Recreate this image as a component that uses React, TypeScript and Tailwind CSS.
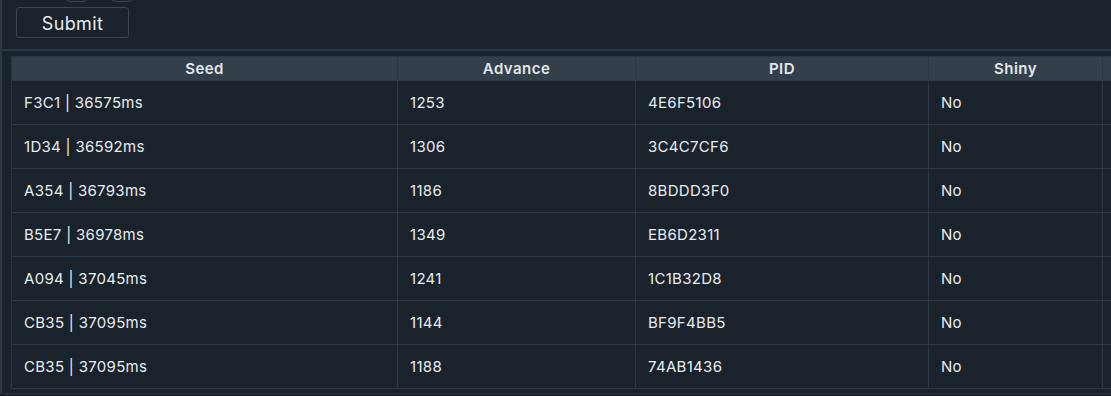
import React from "react";

const rows = [
  ["F3C1 | 36575ms", "1253", "4E6F5106", "No"],
  ["1D34 | 36592ms", "1306", "3C4C7CF6", "No"],
  ["A354 | 36793ms", "1186", "8BDDD3F0", "No"],
  ["B5E7 | 36978ms", "1349", "EB6D2311", "No"],
  ["A094 | 37045ms", "1241", "1C1B32D8", "No"],
  ["CB35 | 37095ms", "1144", "BF9F4BB5", "No"],
  ["CB35 | 37095ms", "1188", "74AB1436", "No"],
];

export default function App() {
  return (
    <div
      className="w-[1111px] h-[396px] overflow-hidden bg-[#1a222b] text-[#e8edf1]"
      style={{ fontFamily: "Inter, 'Open Sans', sans-serif" }}
    >
      <div className="h-[394px] border-l-2 border-b border-[#2b3742] flex flex-col">
        <div className="h-[51px] border-b-2 border-[#2b3742] pl-[14px] flex flex-col">
          <div className="flex mt-[-18px] h-[20px]">
            <div className="ml-[49px] w-[24px] h-[20px] rounded-md border border-[#3a4652]" />
            <div className="ml-[21px] w-[24px] h-[20px] rounded-md border border-[#3a4652]" />
          </div>
          <button className="mt-[5px] w-[113px] h-[31px] pt-[2px] rounded-[3px] border border-[#3a4652] text-[18px] text-[#e8edf1] tracking-[0.02em] flex items-center justify-center">
            Submit
          </button>
        </div>
        <div className="pt-[5px] pl-[9px] overflow-hidden">
          <table className="table-fixed border-collapse w-[1200px] text-[15px]">
            <colgroup>
              <col className="w-[386px]" />
              <col className="w-[238px]" />
              <col className="w-[293px]" />
              <col className="w-[174px]" />
              <col className="w-[109px]" />
            </colgroup>
            <thead>
              <tr className="h-[24px] bg-[#333f4a]">
                {["Seed", "Advance", "PID", "Shiny", ""].map((h, i) => (
                  <th
                    key={i}
                    className="border border-[#2b3742] font-semibold text-[15px] text-[#e3e7ea] text-center p-0 leading-[22px] tracking-[0.03em]"
                  >
                    {h}
                  </th>
                ))}
              </tr>
            </thead>
            <tbody>
              {rows.map((r, i) => (
                <tr key={i} className="h-[44px]">
                  {r.map((c, j) => (
                    <td
                      key={j}
                      className="border border-[#2b3742] p-0 pl-3 pt-[1px] text-left align-middle tracking-[0.02em]"
                    >
                      {c}
                    </td>
                  ))}
                  <td className="border border-[#2b3742]" />
                </tr>
              ))}
            </tbody>
          </table>
        </div>
      </div>
    </div>
  );
}
